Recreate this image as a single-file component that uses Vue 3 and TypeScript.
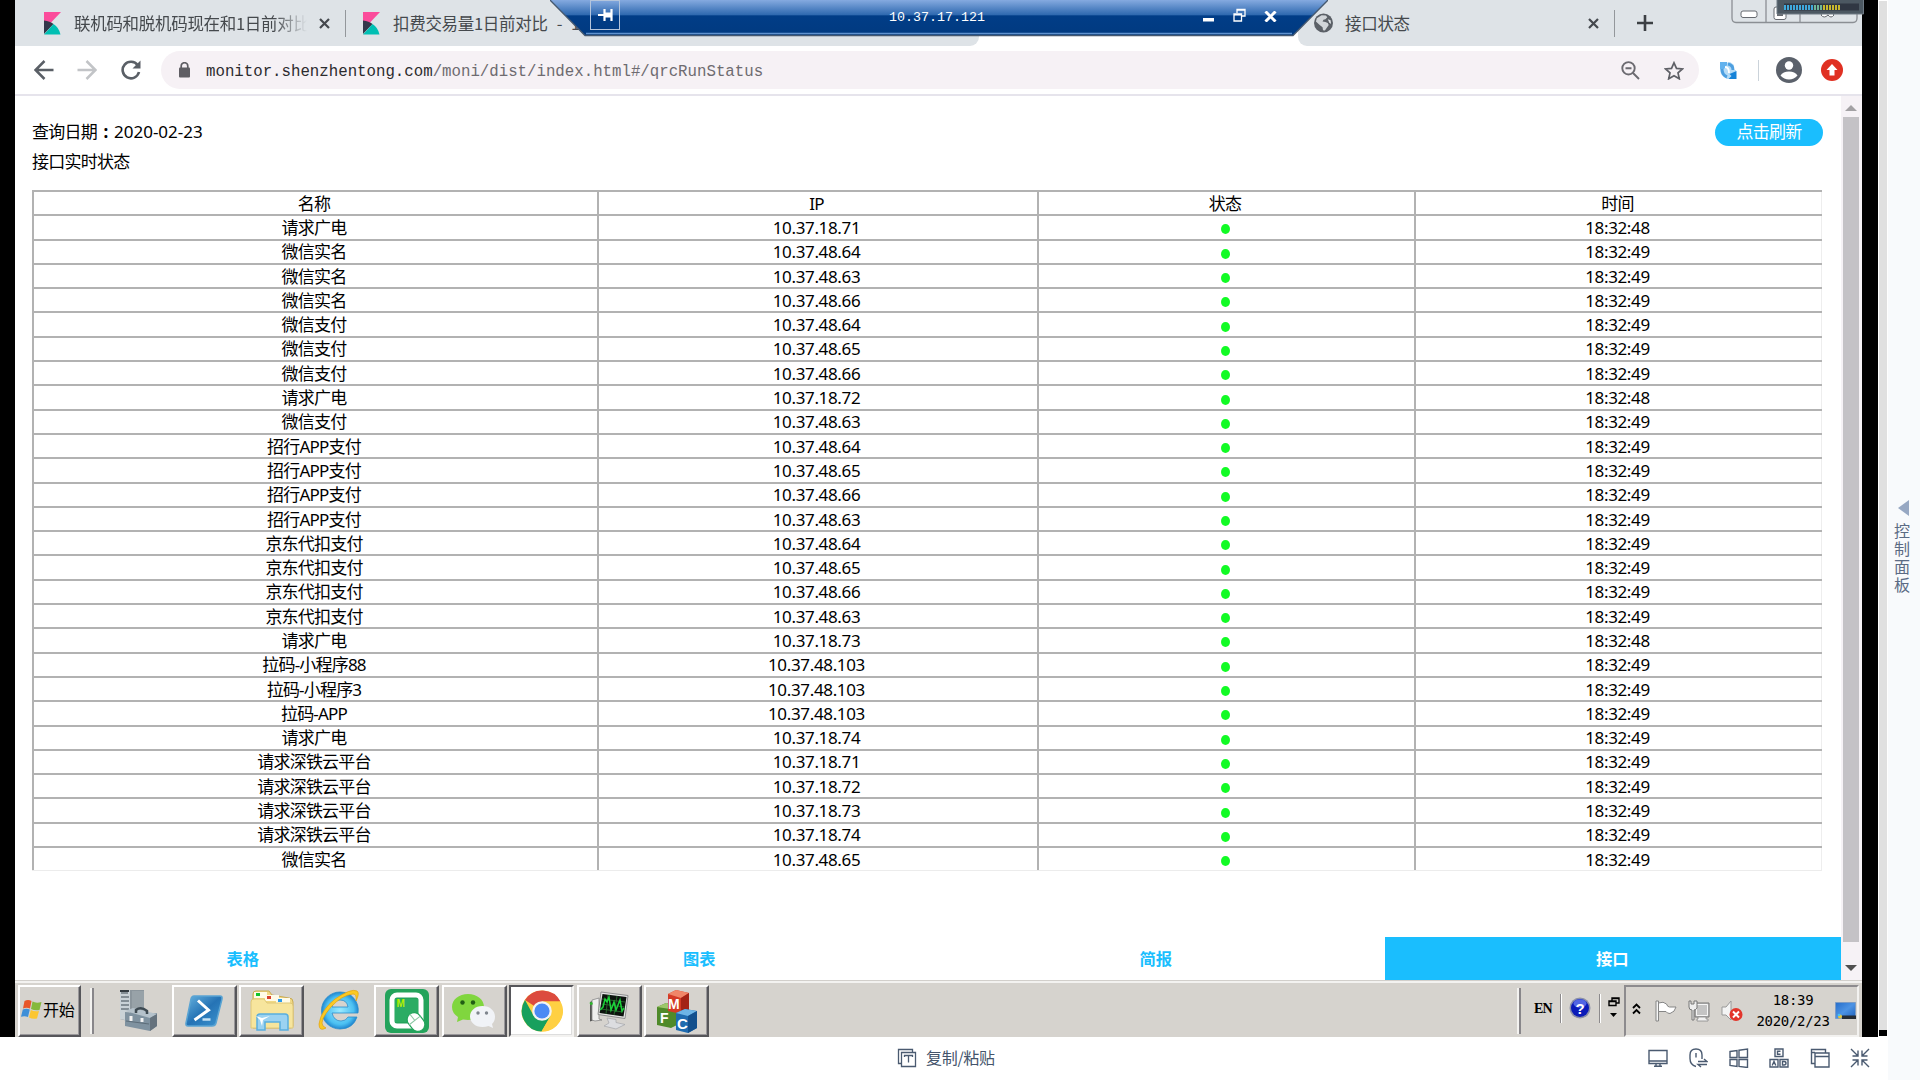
<script setup lang="ts">
interface Row {
  name: string
  ip: string
  time: string
}

const make = (name: string, ip: string, sec = '49'): Row => ({ name, ip: '10.37.' + ip, time: '18:32:' + sec })

const headers: string[] = ['名称', 'IP', '状态', '时间']

const rows: Row[] = [
  make('请求广电', '18.71', '48'),
  make('微信实名', '48.64'),
  make('微信实名', '48.63'),
  make('微信实名', '48.66'),
  make('微信支付', '48.64'),
  make('微信支付', '48.65'),
  make('微信支付', '48.66'),
  make('请求广电', '18.72', '48'),
  make('微信支付', '48.63'),
  make('招行APP支付', '48.64'),
  make('招行APP支付', '48.65'),
  make('招行APP支付', '48.66'),
  make('招行APP支付', '48.63'),
  make('京东代扣支付', '48.64'),
  make('京东代扣支付', '48.65'),
  make('京东代扣支付', '48.66'),
  make('京东代扣支付', '48.63'),
  make('请求广电', '18.73', '48'),
  make('拉码-小程序88', '48.103'),
  make('拉码-小程序3', '48.103'),
  make('拉码-APP', '48.103'),
  make('请求广电', '18.74'),
  make('请求深铁云平台', '18.71'),
  make('请求深铁云平台', '18.72'),
  make('请求深铁云平台', '18.73'),
  make('请求深铁云平台', '18.74'),
  make('微信实名', '48.65'),
]

const footTabs: string[] = ['表格', '图表', '简报', '接口']
</script>

<template>
  <div class="screen">
    <div class="left">
      <div class="remote">
        <div class="desktop">
          <!-- browser tabs -->
          <div class="tabs">
            <div class="tabs-left">
              <svg class="kibana" width="17" height="23" viewBox="0 0 17 23"><path d="M0 0h17L0 18z" fill="#fb4c9b" /><path d="M0 8.500Q6 9 9.500 12L0 22z" fill="#33374a" /><path d="M9.500 12Q15 15.500 16.500 22.500H0z" fill="#00bfb3" /></svg>
              <span class="tab-text first">联机码和脱机码现在和1日前对比</span>
              <svg class="close" width="11" height="11" viewBox="0 0 11 11"><path d="M1 1l9 9M10 1l-9 9" stroke="#45494e" stroke-width="2.200" /></svg>
              <i class="tab-div" />
              <svg class="kibana second" width="17" height="23" viewBox="0 0 17 23"><path d="M0 0h17L0 18z" fill="#fb4c9b" /><path d="M0 8.500Q6 9 9.500 12L0 22z" fill="#33374a" /><path d="M9.500 12Q15 15.500 16.500 22.500H0z" fill="#00bfb3" /></svg>
              <span class="tab-text">扣费交易量1日前对比</span>
              <span class="tab-text dash">-</span>
              <span class="tab-text one">1</span>
            </div>
            <div class="tabs-right">
              <svg width="19" height="20" viewBox="0 0 20 20"><circle cx="10" cy="10" r="10" fill="#5b6067" /><path d="M8 1.800L12.500 2 14 4l-2 2-2 .5-1 2 3 .5 2.500 1 1 2-2 3-2 3-2-.5-.5-3-3-2.500L2 8.500 3 5z" fill="#dee2e6" opacity=".9" /><path d="M14.500 6l3 1 .5 4-2-1.500z" fill="#dee2e6" /></svg>
              <span class="tab-text state">接口状态</span>
              <svg class="close" width="11" height="11" viewBox="0 0 11 11"><path d="M1 1l9 9M10 1l-9 9" stroke="#45494e" stroke-width="2.200" /></svg>
              <i class="tab-div" />
              <svg class="plus" width="16" height="16" viewBox="0 0 16 16"><path d="M8 0v16M0 8h16" stroke="#3c4044" stroke-width="2.600" /></svg>
            </div>
          </div>

          <!-- address bar -->
          <div class="toolbar">
            <svg class="back" width="20" height="20" viewBox="0 0 20 20"><path d="M19.500 10H2M10.500 1L1.500 10l9 9" fill="none" stroke="#5a5f66" stroke-width="2.500" /></svg>
            <svg class="fwd" width="20" height="20" viewBox="0 0 20 20"><path d="M.5 10H18M9.500 1l9 9-9 9" fill="none" stroke="#c2c4c7" stroke-width="2.500" /></svg>
            <svg class="reload" width="20" height="20" viewBox="0 0 20 20"><path d="M16.700 5.200A8.300 8.300 0 1 0 18 12" fill="none" stroke="#5a5f66" stroke-width="2.600" /><path d="M19.500.5v8h-8z" fill="#5a5f66" /></svg>
            <div class="pill">
              <svg width="11" height="16" viewBox="0 0 11 16"><rect y="5.500" width="11" height="10" rx="1" fill="#5f5e63" /><path d="M2.200 6V4a3.300 3.300 0 0 1 6.600 0v2" fill="none" stroke="#5f5e63" stroke-width="1.700" /></svg>
              <span class="url">monitor.shenzhentong.com<em>/moni/dist/index.html#/qrcRunStatus</em></span>
              <svg width="19" height="19" viewBox="0 0 19 19"><g fill="none" stroke="#6b6a70" stroke-width="1.900"><circle cx="7.500" cy="7.300" r="6.200" /><path d="M12 12l6 6M4.500 7.300h6" /></g></svg>
              <svg class="star" width="20" height="19" viewBox="0 0 20 19"><path d="M10 1.800l2.500 5.600 6 .5-4.500 4 1.300 5.900L10 14.700l-5.300 3.100L6 11.900l-4.500-4 6-.5z" fill="none" stroke="#5f6066" stroke-width="1.700" /></svg>
            </div>
            <svg class="ext" width="18" height="19" viewBox="0 0 18 19"><path d="M1 2h6l4-1 4 3v5h2v9H8l-3-3-3-2-1-5z" fill="#b5dbf6" /><path d="M1 1h7v3L5 8H1z" fill="#62b2ee" /><path d="M3 8q0 6 5 8M9 3q5 1 5 6" fill="none" stroke="#4d9fe0" stroke-width="3" /><path d="M6 6q4 0 4 6" fill="none" stroke="#fff" stroke-width="1.800" /><path d="M17.500 10v8H9.500l3-3-2-2z" fill="#1683d8" /></svg>
            <i class="tool-div" />
            <svg class="user" width="26" height="26" viewBox="0 0 26 26"><circle cx="13" cy="13" r="13" fill="#5b616b" /><circle cx="13" cy="8.500" r="4.200" fill="#fff" /><path d="M4.500 18.500Q7 14.500 13 14.500t8.500 4Q18 22.500 13 22.500t-8.500-4z" fill="#fff" /></svg>
            <svg class="up" width="22" height="22" viewBox="0 0 22 22"><circle cx="11" cy="11" r="11" fill="#e03022" /><path d="M11 5l5.500 6H13.500v5.500h-5V11h-3z" fill="#fff" /></svg>
          </div>

          <!-- page -->
          <div class="page">
            <div class="content">
              <div class="head">
                <div class="titles">
                  <p class="date">查询日期<b>:</b><span>2020-02-23</span></p>
                  <p>接口实时状态</p>
                </div>
                <button class="refresh">点击刷新</button>
              </div>
              <div class="table">
                <div v-for="h in headers" :key="h" class="cell">{{ h }}</div>
                <template v-for="(r, i) in rows" :key="i">
                  <div class="cell">{{ r.name }}</div>
                  <div class="cell num">{{ r.ip }}</div>
                  <div class="cell"><i class="dot" /></div>
                  <div class="cell num">{{ r.time }}</div>
                </template>
              </div>
              <div class="foot">
                <div v-for="(t, i) in footTabs" :key="t" :class="{ on: i === 3 }">{{ t }}</div>
              </div>
            </div>
            <div class="scroll">
              <svg width="12" height="6" viewBox="0 0 12 6"><path d="M6 0l6 6H0z" fill="#a3a1a4" /></svg>
              <div class="thumb" />
              <svg width="12" height="6" viewBox="0 0 12 6"><path d="M6 6l6-6H0z" fill="#505050" /></svg>
            </div>
          </div>

          <!-- taskbar -->
          <div class="taskbar">
            <div class="btn start">
              <svg width="21" height="20" viewBox="0 0 21 20"><path d="M3.500 2Q7 0 10.500 2L9 9.500Q5.500 8 2 9.500z" fill="#e8562a" /><path d="M11.500 2.500Q15 4.500 20.500 3L18.500 11Q14 12 10 10z" fill="#86b93c" /><path d="M1.800 10.500Q5.500 9 8.800 10.500L7 18Q3.500 16.500 0 17.800z" fill="#3f8fd8" /><path d="M9.800 11Q14 13 18 12l-2 7.500q-4.500 1-8-1z" fill="#fbc631" /></svg>
              <span>开始</span>
            </div>
            <i class="grip" />
            <div class="slots">
              <div class="slot">
                <svg width="40" height="42" viewBox="0 0 40 42"><path d="M2 1h24v31H10L2 30z" fill="#8b959c" /><path d="M2 1h10v31L2 30z" fill="#c9d2d7" /><path d="M3 4h7M3 8h8M3 12h8M3 16h8M3 20h8" stroke="#6c7880" stroke-width="1.500" /><path d="M2 1h9v2H2z" fill="#333c42" /><path d="M14 2h12v29H14z" fill="#98a2a8" /><path d="M7 23l24 2 8-1v13l-7 5L7 37z" fill="#7f92a0" /><path d="M7 22l8-3 24 6-7 4z" fill="#b5c2cb" /><path d="M32 29l7-4v12l-7 5z" fill="#65727d" /><path d="M18 24v-3q5-4 11 1v3" fill="none" stroke="#3e4a52" stroke-width="2.500" /><path d="M13 27v5M24 29v4" stroke="#f2f2f2" stroke-width="3" /><path d="M8 32l23 3" stroke="#5d6d79" /></svg>
              </div>
              <div class="slot btn">
                <svg width="38" height="32" viewBox="0 0 38 32"><defs><linearGradient id="ps" x2="1" y2="1"><stop stop-color="#67b2df" /><stop offset=".5" stop-color="#2573b5" /><stop offset="1" stop-color="#3d94cf" /></linearGradient></defs><path d="M9 1h26q2.500 0 2 3l-6 24q-.7 3-4 3H3q-2.500 0-2-3L6 4q.7-3 3-3z" fill="url(#ps)" stroke="#5aa4d3" stroke-width="1.500" /><path d="M13 5.500L23.500 15 9.500 25" fill="none" stroke="#fff" stroke-width="3" /><path d="M17.500 24.500h8" stroke="#c5e2f4" stroke-width="2.500" /></svg>
              </div>
              <div class="slot btn">
                <svg width="46" height="42" viewBox="0 0 46 42"><path d="M4 4q0-3 3-3h13l3 4 17 3q4 0 4 4v24q0 2-3 2H4z" fill="#f1d985" stroke="#c9ab55" /><path d="M5 2h13v6H5zM16 5h14v6H16zM27 8h14v6H27z" fill="#fffbe8" /><path d="M7 3h4v3H7z" fill="#12c42c" /><path d="M18 6h4v3h-4z" fill="#d9412f" /><path d="M29 9h4v3h-4z" fill="#2c9bea" /><path d="M2 12q0-3 3-3h10l3 4h23q3 0 3 3v22H2z" fill="#f7e59d" stroke="#dfc878" /><path d="M8 40V27q0-3 3-3h25q3 0 3 3v13h-8v-8H16v8z" fill="#9bd2f1" stroke="#5aaede" stroke-width="1.500" /><path d="M7 26l6 2 8-2-7 4-1 6-2-6z" fill="#fff" /></svg>
              </div>
              <div class="slot">
                <svg width="44" height="42" viewBox="0 0 44 42"><defs><radialGradient id="ie"><stop stop-color="#9ceaff" /><stop offset=".75" stop-color="#4bc0f2" /><stop offset="1" stop-color="#2187d0" /></radialGradient></defs><path d="M23 3a18 18 0 0 1 18 21H15q2 8 9 8 5 0 7-4h9q-4 12-17 12A18.500 18.500 0 0 1 23 3zM15 18h16q-1-7-8-7t-8 7z" fill="url(#ie)" stroke="#2a8dcb" stroke-width=".8" /><path d="M9 39Q2 43 2 35 4 21 18 10 34-1 40 2q3 2-1 10 1-7-3-7Q25 6 14 18 2 32 6 37z" fill="#fbc924" stroke="#e3a20c" stroke-width=".7" /></svg>
              </div>
              <div class="slot btn">
                <svg width="44" height="44" viewBox="0 0 44 44"><rect width="44" height="44" rx="6" fill="#23a35b" /><rect x="7" y="6" width="29" height="31" rx="5" fill="none" stroke="#fff" stroke-width="5" /><path d="M10 10h23v23H10z" fill="#2bac64" /><text x="11.500" y="18" font-size="10" font-weight="700" fill="#b6f000" font-family="Liberation Sans">M</text><g transform="rotate(-38 31 33)"><rect x="24" y="23" width="14" height="20" rx="7" fill="#fff" stroke="#23a35b" stroke-width="1.200" /><path d="M24 31h14M31 23v8" stroke="#8bc7a3" /></g></svg>
              </div>
              <div class="slot btn">
                <svg width="44" height="36" viewBox="0 0 44 36"><path d="M16 1c9 0 16 5.500 16 13S25 27 16 27l-5-.5L5 29l1-5Q0 20 0 14C0 6.500 7 1 16 1z" fill="#80d63e" /><circle cx="10.500" cy="9.500" r="2.200" fill="#215e14" /><circle cx="21" cy="9.500" r="2.200" fill="#215e14" /><path d="M30.500 13C38 13 43 18 43 23.500q0 4.500-3 7.500l1 4-4.500-2q-3 1-6 1C23 34 18 29 18 23.500S23 13 30.500 13z" fill="#f1f3f7" /><circle cx="26" cy="20" r="1.700" fill="#7f858d" /><circle cx="34.500" cy="20" r="1.700" fill="#7f858d" /></svg>
              </div>
              <div class="slot btn pressed">
                <svg width="42" height="42" viewBox="0 0 42 42"><circle cx="21" cy="21" r="20.500" fill="#ffd043" /><path d="M21 21L4 10a20.500 20.500 0 0 1 35.500 1.500H21z" fill="#dc4b3e" /><path d="M12.500 25.500L4 10A20.500 20.500 0 0 0 20.500 41.500L29.500 26z" fill="#17a05d" /><path d="M29.500 26L20.500 41.500A20.500 20.500 0 0 0 39.500 11.500H21z" fill="#ffd043" /><circle cx="21" cy="21" r="9.800" fill="#f3f3f3" /><circle cx="21" cy="21" r="7.600" fill="#4a8af4" /></svg>
              </div>
              <div class="slot btn">
                <svg width="42" height="40" viewBox="0 0 42 40"><path d="M2 11l4-2v20l-4 1.500z" fill="#555" /><path d="M4 9l7-2v21l3 1-7 1-3-1z" fill="#eee" stroke="#888" stroke-width=".8" /><path d="M2 13l2.500-1" stroke="#2eb62e" stroke-width="2.500" /><path d="M13 1l27 3.500-3 23-27-4z" fill="#e6e6e6" stroke="#8e8e8e" /><path d="M14.500 3l24 3-3 19.500-24-3.500z" fill="#0c130d" /><path d="M14 8l23 3M13.500 13l23 3M13 18l22 3M20 4l-2 19M29 5l-3 19" stroke="#2a6a2f" stroke-width=".9" /><path d="M12 19l3-3 2-8 2 3 2-5 2 13 3-8 2 8 4-10 2 11 2-3" fill="none" stroke="#1cd33a" stroke-width="1.500" /><path d="M19 27l9 1.500v3l9 2-9 4.500-12-3 5-3z" fill="#dcdde0" stroke="#a5a6aa" stroke-width=".7" /></svg>
              </div>
              <div class="slot btn">
                <svg width="42" height="44" viewBox="0 0 42 44"><path d="M1 18l9-4 11 2v20l-6 3L1 36z" fill="#4f8a2a" /><path d="M1 18l9-4 11 2-7 4z" fill="#9dc76a" /><path d="M12 5l8-4 13 3v17l-8 4-13-3z" fill="#d43b26" /><path d="M12 5l8-4 13 3-8 5z" fill="#f08668" /><path d="M25 9l8-5v17l-8 4z" fill="#a32316" /><path d="M20 24l9-4 12 2v17l-9 5-12-3z" fill="#1f6bb0" /><path d="M20 24l9-4 12 2-9 5z" fill="#6db4e6" /><path d="M32 27l9-5v17l-9 5z" fill="#124f8d" /><g fill="#fff" font-family="Liberation Sans" font-weight="700"><text x="12" y="20" font-size="14">M</text><text x="4" y="34" font-size="14">F</text><text x="21" y="40" font-size="15">C</text></g></svg>
              </div>
            </div>
            <div class="right-tools">
              <i class="grip" />
              <span class="en">EN</span>
              <i class="sep" />
              <svg width="22" height="22" viewBox="0 0 22 22"><circle cx="11" cy="11" r="10.500" fill="#8b90a8" /><circle cx="11" cy="11" r="9" fill="#0b1bb8" /><ellipse cx="11" cy="6.500" rx="6.500" ry="4.200" fill="#5266e4" /><text x="11" y="16.500" text-anchor="middle" font-size="15" font-weight="700" fill="#fff" font-family="Liberation Sans">?</text></svg>
              <i class="sep" />
              <svg class="mini" width="12" height="22" viewBox="0 0 12 22"><path d="M4 4.500V1h7v5H8M1 4h7v4.500H1zM1 4.500h7M4 1.500h7" fill="none" stroke="#000" stroke-width="1.400" /><path d="M2 16h7l-3.500 4z" /></svg>
            </div>
            <div class="tray">
              <svg class="chev" width="9" height="12" viewBox="0 0 9 12"><path d="M1 5l3.500-3.500L8 5M1 10.500L4.500 7 8 10.500" fill="none" stroke="#000" stroke-width="1.800" /></svg>
              <svg class="flag" width="22" height="22" viewBox="0 0 22 22"><path d="M1 1h2.500v20H1z" fill="#f5f5f5" stroke="#858585" /><path d="M3.500 3q5-2 8 1 1 3 3 3h6.500q-1 5-6 6.500-3 0-4-2H3.500z" fill="#fff" stroke="#858585" /></svg>
              <svg class="net" width="22" height="22" viewBox="0 0 22 22"><path d="M7 3h14v14H7z" fill="#c4c4c4" stroke="#777" /><path d="M8.500 4.500h11v11h-11z" fill="none" stroke="#f6f6f6" /><path d="M10 17h8v2h2v2H9v-2h1z" fill="#f2f2f2" stroke="#888" stroke-width=".8" /><path d="M1 1h2v3h3V1h3v7q-1 2-3 2v10H4V10Q1 10 1 7z" fill="#eee" stroke="#777" /></svg>
              <svg class="spk" width="22" height="22" viewBox="0 0 22 22"><path d="M1 7h4l5-6v19l-5-5H1z" fill="#f4f4f4" stroke="#999" /><circle cx="15" cy="14.500" r="6.500" fill="#e3352b" /><path d="M12 11.500l6 6M18 11.500l-6 6" stroke="#fff" stroke-width="2" /></svg>
              <div class="clock"><span>18:39</span><span>2020/2/23</span></div>
              <svg class="mon" width="21" height="18" viewBox="0 0 21 18"><defs><linearGradient id="mn" x2="1" y2="1"><stop stop-color="#256dca" /><stop offset=".5" stop-color="#4d93e4" /><stop offset="1" stop-color="#1c60bb" /></linearGradient></defs><path d="M.5.5h20v16H.5z" fill="url(#mn)" stroke="#7d9cc4" /><path d="M7 13.500h14V17H7z" fill="#262d35" /><circle cx="5" cy="14.500" r="2" fill="#e8c63a" /><circle cx="4" cy="13" r="1.300" fill="#4ac0f0" /></svg>
            </div>
          </div>
        </div>
      </div>

      <!-- remote console actions -->
      <div class="bottom">
        <div class="paste">
          <svg width="20" height="20" viewBox="0 0 20 20"><g fill="none" stroke="#4a5a70" stroke-width="1.300"><path d="M4 15.500H1.500v-14h14V4" /><path d="M4.500 4.500h14v14h-14zM7.500 9V7.500h8V9M11.500 7.500v7" /></g></svg>
          <span>复制/粘贴</span>
        </div>
        <div class="acts">
          <svg viewBox="0 0 20 20"><path d="M1 2.500h18v13H1zM1 13h18M6 18.300h8M8 15.500v3M12 15.500v3" /></svg>
          <svg viewBox="0 0 20 20"><path d="M8 18.500q-6-1.500-6-8V7q0-6 6-6t6 6v4M8 5v4.500M10 13.500h9l-3-2.500M19 16.500h-9l3 2.500" /></svg>
          <svg viewBox="0 0 20 20"><path d="M1 3.500l7-1v7H1zM10 2.200L18.500 1v8.500H10zM1 11.500h7v7l-7-1zM10 11.500h8.500V19.500L10 18.500z" /></svg>
          <svg viewBox="0 0 20 20"><path d="M6 1h8v7.500H6zM1 11.500h8V19H1zM11 11.500h8V19h-8zM11.500 3.200h-3v3h3M3.200 17.500l1.800-4 1.800 4M13.500 13.500h1.500q2 0 2 1.700t-2 1.800h-1.500z" /></svg>
          <svg viewBox="0 0 20 20"><path d="M5 15.500H1.500v-14h14V5M5 5h14v14H5zM5 8.500h14M1.500 4.500H5" /></svg>
          <svg viewBox="0 0 20 20"><path d="M1 1l7 7M8 2.500V8H2.500M19 1l-7 7M12 2.500V8h5.500M1 19l7-7M8 17.500V12H2.500M19 19l-7-7M12 17.500V12h5.500" /></svg>
        </div>
      </div>
    </div>

    <aside class="side">
      <svg width="11" height="16" viewBox="0 0 11 16"><path d="M11 0v16L0 8z" fill="#97a8c3" /></svg>
      <span class="side-text">控制面板</span>
    </aside>

    <!-- remote connection bar -->
    <div class="conn">
      <svg class="conn-bg" width="778" height="37" viewBox="0 0 778 37"><defs><linearGradient id="cb" x2="0" y2="1"><stop stop-color="#85aae0" /><stop offset=".43" stop-color="#2c67ae" /><stop offset=".44" stop-color="#013d87" /><stop offset="1" stop-color="#013a80" /></linearGradient></defs><path d="M0 0h778l-35 35.500H35z" fill="url(#cb)" /><path d="M36 33.500h706" stroke="#5f92cf" stroke-width="1.500" /><path d="M0 0l35 35.500h708L778 0" fill="none" stroke="#45586f" stroke-width="1.300" /></svg>
      <div class="conn-row">
        <div class="pin"><svg width="15" height="14" viewBox="0 0 15 14"><path d="M0 7h6M6.500 1v12M13.500 1v12M6.500 7h7M6.500 5.500h7M6.500 8.500h7" stroke="#fff" stroke-width="2.200" /></svg></div>
        <span class="conn-ip">10.37.17.121</span>
        <svg class="c-min" width="11" height="4" viewBox="0 0 11 4"><path d="M0 0h11v3.500H0z" fill="#fff" /></svg>
        <svg class="c-res" width="13" height="14" viewBox="0 0 13 14"><path d="M4 5V1.500h8V8H9M4 2h8M1 6h7.500v7H1zM1 6.800h7.500" fill="none" stroke="#fff" stroke-width="1.300" /></svg>
        <svg class="c-x" width="13" height="11" viewBox="0 0 13 11"><path d="M1.500.5l10 10M11.500.5l-10 10" stroke="#fff" stroke-width="3" /></svg>
      </div>
    </div>

    <!-- window buttons and level meter -->
    <svg class="winbtn" width="136" height="24" viewBox="0 0 136 24"><g fill="none" stroke="#8b8f94" stroke-width="1.300"><path d="M1 0v18q0 4.500 4 4.500h117q4 0 4-4.500V0M35 0v22M69 0v22" /></g><rect x="10" y="11" width="16" height="6.500" rx="2" fill="#fff" stroke="#666a70" /><rect x="43" y="7" width="12" height="12.500" rx="2" fill="#fff" stroke="#666a70" /><path d="M46 11h6v5h-6z" fill="#666a70" /><path d="M90 15q3-6 6-1 4-4 7 1-3 4-6 0-4 4-7 0z" fill="#fff" stroke="#666a70" /><path d="M46-1h86.500v15H46z" fill="#4c5862" stroke="#6f7a84" /><path d="M53 3.500h75v7H53z" fill="#303743" /></svg>
    <div class="meter"><i v-for="n in 19" :key="n" :class="{ green: n > 10, yellow: n > 13 }" /></div>
  </div>
</template>

<style>
body {
  background: #fff;
  overflow: hidden;
}
</style>

<style scoped>
.screen {
  position: relative;
  display: flex;
  width: 1920px;
  height: 1080px;
  background: #fff;
  font-family: "Noto Sans", "Noto Sans CJK SC", sans-serif;
  color: #000;
  overflow: hidden;
}
.screen * { box-sizing: border-box; }
svg { display: block; flex: none; }
i { display: block; flex: none; font-style: normal; }
.left { width: 1888px; display: flex; flex-direction: column; }
.remote {
  height: 1037px;
  padding-left: 15px;
  padding-right: 26px;
  background: linear-gradient(#000, #000) 0 0 / 1878px 1037px no-repeat, linear-gradient(#e0e0e0 1029px, #000 1029px) 1879px 1px / 8px 1035px no-repeat;
}
.desktop { width: 1847px; height: 1037px; display: flex; flex-direction: column; background: #fff; }

.tabs { height: 46px; display: flex; justify-content: space-between; }
.tabs-left, .tabs-right { display: flex; align-items: center; background: #dee3e7; height: 46px; }
.tabs-left { width: 964px; padding-left: 29px; border-radius: 0 0 9px 0; }
.tabs-right { width: 564px; padding-left: 16px; border-radius: 0 0 0 9px; }
.tab-text { font-family: "Noto Sans CJK SC", sans-serif; font-size: 16.500px; letter-spacing: -0.300px; line-height: 24px; color: #45494d; margin: -1px 0 0 13px; white-space: pre; }
.tab-text.first { width: 233px; overflow: hidden; -webkit-mask-image: linear-gradient(90deg, #000 86%, transparent); mask-image: linear-gradient(90deg, #000 86%, transparent); }
.tab-text.state { width: 243px; margin-left: 12px; }
.tab-text.dash { margin-left: 9px; }
.tab-text.one { margin-left: 9px; }
.tabs-left .close { margin-left: 12px; }
.tab-div { width: 1px; height: 27px; background: #93979b; }
.tabs-left .tab-div { margin: 0 17px 0 15px; }
.tabs-right .tab-div { margin: 0 22px 0 15px; }
.tabs-right .close { margin-left: 0; }

.toolbar { height: 50px; display: flex; align-items: center; padding: 0 0 0 19px; border-bottom: 2px solid #e6e4ec; }
.fwd { margin-left: 23px; }
.reload { margin-left: 24px; }
.pill { margin-left: 20px; width: 1538px; height: 38px; border-radius: 19px; background: #f6f1f5; display: flex; align-items: center; padding: 0 15px 0 18px; }
.url { flex: 1; margin: 3px 0 0 16px; font-family: "Liberation Mono", monospace; font-size: 15.740px; color: #2c2b2e; white-space: pre; }
.url em { font-style: normal; color: #6e6b70; }
.star { margin-left: 24px; }
.ext { margin-left: 20px; }
.tool-div { width: 1px; height: 21px; margin-left: 21px; background: #cbd3da; }
.user { margin-left: 17px; }
.up { margin-left: 19px; }

.page { height: 884px; display: flex; }
.content { width: 1826px; display: flex; flex-direction: column; }
.head { height: 94px; display: flex; justify-content: space-between; padding: 23px 18px 0 17px; }
.titles p { margin: 0 0 5px; height: 25px; line-height: 25px; font-size: 17px; letter-spacing: -0.750px; display: flex; }
.date b { width: 17px; text-align: center; }
.date span { letter-spacing: 0; }
.refresh { width: 108px; height: 27px; border: 0; border-radius: 14px; background: #1abefe; color: #fff; padding: 0; font: 17px/23px "Noto Sans CJK SC", sans-serif; letter-spacing: -0.700px; display: flex; justify-content: center; align-items: flex-start; }
.table {
  margin-left: 17px;
  width: 1790px;
  height: 681px;
  display: grid;
  grid-template-columns: 565px 440px 377px 408px;
  grid-template-rows: repeat(28, 24.300px);
  border-right: 1px solid #eee;
  border-bottom: 1px solid #ececec;
}
.cell { display: flex; align-items: center; justify-content: center; border-top: 2px solid #b2b2b2; border-left: 2px solid #b2b2b2; font-size: 17px; line-height: 20px; letter-spacing: -0.800px; overflow: hidden; padding: 0 3px 0 0; }
.cell { padding-top: 1px; }
.num { letter-spacing: -0.350px; }
.dot { width: 9px; height: 10px; border-radius: 50%; background: #12fb25; margin-top: 3px; }
.foot { margin-top: auto; height: 43px; display: flex; margin-bottom: 0; }
.foot div { flex: 1; text-align: center; font-weight: 700; font-size: 16.300px; line-height: 45px; color: #1abefe; padding-right: 1px; }
.foot .on { background: #1abefe; color: #fff; }
.scroll { width: 21px; background: #f6f2f6; display: flex; flex-direction: column; align-items: center; padding: 9px 1px 9px 0; }
.thumb { width: 16px; height: 825px; margin: 6px 0 auto; background: #c4c2c6; }

.taskbar { height: 57px; background: #d6d3ce; border-top: 1px solid #d2cfcb; box-shadow: inset 0 2px #f3f2f0; display: flex; padding-top: 4px; }
.btn { border: 2px solid; border-color: #fff #56565a #56565a #fff; box-shadow: inset -1px -1px #99979a; }
.start { width: 63px; height: 52px; margin-left: 3px; display: flex; align-items: center; padding-left: 1px; padding-bottom: 4px; font-size: 16px; letter-spacing: -0.200px; }
.start span { margin-left: 1px; white-space: nowrap; }
.grip { width: 4px; height: 46px; margin-top: 3px; background: #f3f2f0; border-right: 2px solid #88868a; }
.start + .grip { margin-left: 9px; }
.slots { display: flex; gap: 2.500px; margin-left: 10px; }
.slot { width: 65px; height: 52px; display: flex; align-items: center; justify-content: center; }
.slot:first-child { padding: 0 0 2px 3px; }
.slot:nth-child(4) { padding-bottom: 2px; }
.pressed { background: #fff; border-color: #56565a #f3f2f0 #f3f2f0 #56565a; box-shadow: inset -1px -1px #ddd; }
.right-tools { margin-left: auto; display: flex; height: 46px; align-items: center; }
.right-tools .grip { margin-top: 6px; }
.en { width: 18px; margin: 1px 0 0 13px; font: 700 14px "Liberation Serif", serif; letter-spacing: -0.800px; }
.sep { width: 2px; height: 29px; background: #8c8a8c; border-right: 1px solid #fff; margin: 0 7px 0 8px; }
.tray { width: 235px; height: 52px; margin: 0 3px 0 4px; border: 2px solid; border-color: #8d8b8e #f3f2f0 #f3f2f0 #8d8b8e; display: flex; align-items: center; padding-left: 6px; }
.chev { margin-top: -4px; }
.flag { margin-left: 14px; }
.net { margin-left: 11px; }
.spk { margin-left: 11px; }
.clock { width: 80px; margin-left: 10px; display: flex; flex-direction: column; align-items: center; font: 14px/21px "DejaVu Sans Mono", "Liberation Mono", monospace; letter-spacing: -0.300px; }
.mon { margin-left: 2px; }

.bottom { height: 43px; display: flex; align-items: center; background: #fff; color: #44546b; padding-bottom: 1px; }
.paste { margin-left: 897px; display: flex; align-items: center; font-family: "Noto Sans CJK SC", sans-serif; font-size: 16px; letter-spacing: -0.300px; line-height: 24px; }
.paste span { margin: -2px 0 0 9px; }
.acts { margin-left: auto; display: flex; gap: 20.500px; padding-right: 18px; }
.acts svg { width: 20px; height: 20px; fill: none; stroke: #4a5a70; stroke-width: 1.400; }

.side { width: 32px; background: #f8fafc; display: flex; flex-direction: column; align-items: center; padding-top: 500px; color: #5b6b84; font-family: "Noto Sans CJK SC", sans-serif; font-size: 16px; }
.side svg { margin: 0 0 7px -2px; }
.side-text { margin: 0 0 0 -4px; writing-mode: vertical-rl; letter-spacing: 2px; line-height: 18px; }

.conn { position: absolute; left: 550px; top: 0; width: 778px; height: 37px; }
.conn-bg { position: absolute; left: 0; top: 0; }
.conn-row { position: relative; display: flex; height: 34px; padding-left: 40px; }
.pin { width: 30px; height: 30px; border: 1.500px solid #b4c5dc; display: flex; align-items: center; justify-content: center; }
.conn-ip { width: 96px; margin-left: 269px; font: 13.330px/35px "Liberation Mono", monospace; color: #fff; white-space: nowrap; }
.c-min { margin: 18px 0 0 218px; }
.c-res { margin: 8px 0 0 19px; }
.c-x { margin: 11px 0 0 18px; }
.winbtn { position: absolute; left: 1731px; top: 0; }
.meter { position: absolute; left: 1784px; top: 5px; display: flex; gap: 1px; }
.meter i { width: 2px; height: 5px; background: #3fa9dc; }
.meter .green { background: #6fb79a; }
.meter .yellow { background: #c9b92d; }
</style>
